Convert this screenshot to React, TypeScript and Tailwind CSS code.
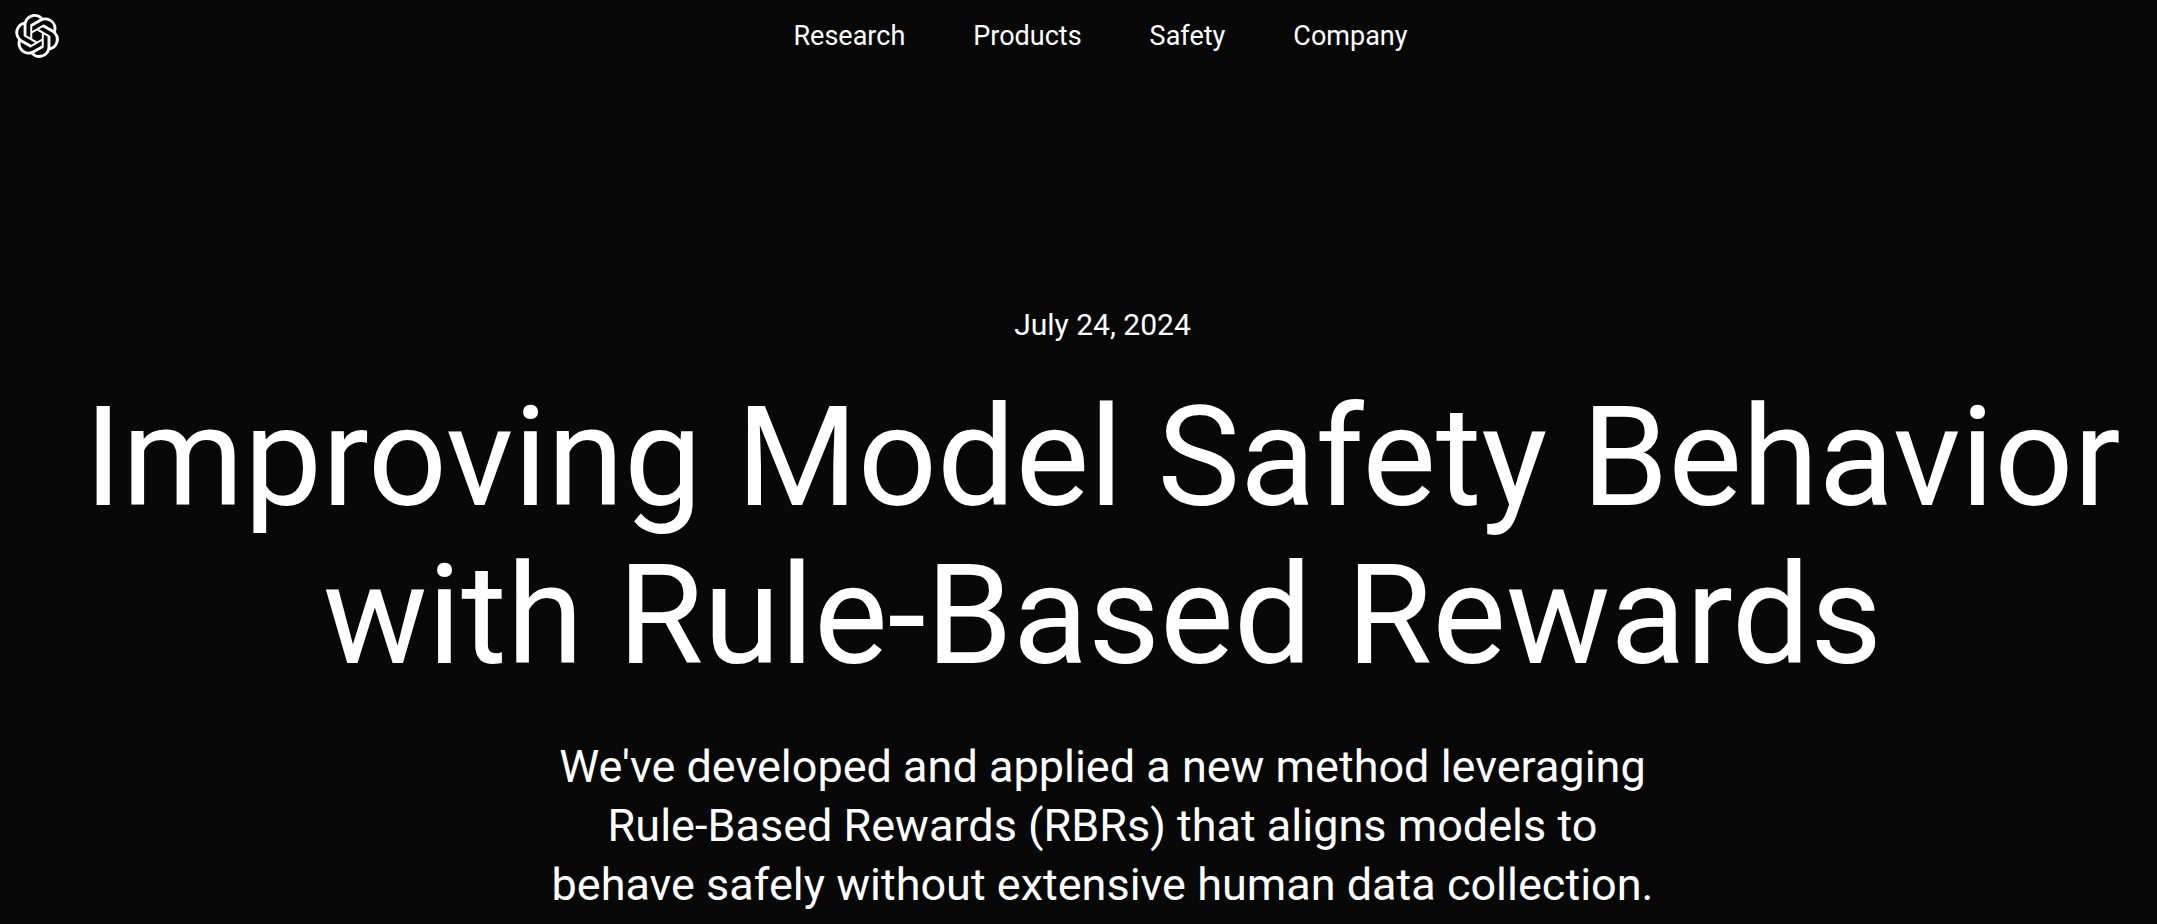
import { SiOpenai } from "react-icons/si";

const links = ["Research", "Products", "Safety", "Company"];

export default function App() {
  return (
    <div className="min-h-screen bg-[#080808] font-[Roboto,'Liberation_Sans',sans-serif] text-white">
      <header className="grid h-[72px] grid-cols-[1fr_auto_1fr] items-center">
        <a href="#home" aria-label="OpenAI home" className="ml-[15px] w-fit">
          <SiOpenai className="size-[44px]" />
        </a>
        <nav aria-label="Main" className="flex gap-[68px] pl-11 text-[27px] leading-[36px]">
          {links.map((l) => (
            <a key={l} href={`#${l.toLowerCase()}`}>{l}</a>
          ))}
        </nav>
      </header>
      <main className="flex flex-col items-center pt-[233px] pl-12 text-center">
        <p className="text-[30px] leading-[40px]">July 24, 2024</p>
        <h1 className="mt-[34px] text-[139px] leading-[158px]">
          Improving Model Safety Behavior
          <br />
          with Rule-Based Rewards
        </h1>
        <p className="mt-[42px] text-[45px] leading-[59px]">
          We've developed and applied a new method leveraging
          <br />
          Rule-Based Rewards (RBRs) that aligns models to
          <br />
          behave safely without extensive human data collection.
        </p>
      </main>
    </div>
  );
}
